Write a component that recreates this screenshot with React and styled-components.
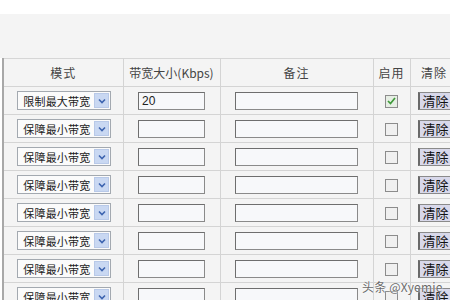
import React from 'react';
import styled, { createGlobalStyle } from 'styled-components';

const GlobalStyle = createGlobalStyle`
  html, body {
    margin: 0;
    padding: 0;
    background: #ffffff;
    font-family: "Liberation Sans", "Noto Sans CJK SC", sans-serif;
  }
`;

const Page = styled.div`
  width: 450px;
  height: 300px;
  overflow: hidden;
  position: relative;
  background: #ffffff;
`;

const TopGap = styled.div`
  height: 14px;
  background: #ffffff;
`;

const Banner = styled.div`
  height: 44px;
  background: #f4f4f4;
`;

const Table = styled.table`
  margin-left: 2px;
  border-collapse: collapse;
  table-layout: fixed;
  width: 455px;
  background: #f4f4f4;
  border-left: 2px solid #a8a8a8;
  border-top: 1px solid #d6d6d6;
`;

const Head = styled.th`
  height: 27px;
  padding: 0;
  font-weight: normal;
  font-size: 12px;
  color: #444;
  text-align: center;
  white-space: nowrap;
  border-right: 1px solid #d4d4d4;
  border-bottom: 1px solid #d4d4d4;
  font-family: "Noto Sans CJK SC", sans-serif;
  letter-spacing: ${p => (p.$wide ? '0' : '1px')};
`;

const Cell = styled.td`
  height: 27px;
  padding: 0;
  text-align: ${p => p.$align || 'center'};
  padding-left: ${p => p.$pl || 0}px;
  border-right: 1px solid #d4d4d4;
  border-bottom: 1px solid #d4d4d4;
  vertical-align: middle;
  white-space: nowrap;
  overflow: hidden;
`;

const Select = styled.div`
  display: inline-flex;
  align-items: center;
  justify-content: space-between;
  width: 94px;
  height: 19px;
  box-sizing: border-box;
  border: 1px solid #a3a9b0;
  background: #fbfbfb;
  padding-left: 5px;
  padding-right: 1px;
  font-size: 11px;
  letter-spacing: 0.2px;
  white-space: nowrap;
  color: #222;
  font-family: "Noto Sans CJK SC", sans-serif;
  vertical-align: middle;
  margin-left: 2px;
`;

const Arrow = styled.span`
  width: 15px;
  height: 15px;
  flex: none;
  background: #c9d8f2;
  border: 1px solid #b8c9e8;
  box-sizing: border-box;
  display: flex;
  align-items: center;
  justify-content: center;
`;

const TextBox = styled.div`
  display: inline-block;
  width: ${p => p.$w}px;
  height: 18px;
  box-sizing: border-box;
  border: 1px solid #6e6e6e;
  border-right-color: #8a8a8a;
  border-bottom-color: #8a8a8a;
  background: #f7f8fa;
  font-size: 12px;
  line-height: 16px;
  padding-left: 3px;
  text-align: left;
  color: #222;
  vertical-align: middle;
`;

const Check = styled.span`
  display: inline-flex;
  align-items: center;
  justify-content: center;
  width: 13px;
  height: 13px;
  box-sizing: border-box;
  border: 1px solid #8c8c8c;
  background: ${p => (p.$on ? '#e6eee4' : '#f0f0f0')};
  vertical-align: middle;
`;

const ClearBtn = styled.span`
  display: inline-block;
  height: 18px;
  width: 40px;
  box-sizing: border-box;
  border-left: 2px solid #6a6a6a;
  border-top: 1px solid #8a8a8a;
  border-bottom: 1px solid #8a8a8a;
  background: #d8d8ea;
  font-size: 13px;
  line-height: 16px;
  padding-left: 3px;
  color: #111;
  font-family: "Noto Sans CJK SC", sans-serif;
  vertical-align: middle;
`;

const Watermark = styled.div`
  position: absolute;
  left: 362px;
  top: 278px;
  font-size: 12px;
  color: #6a6a6a;
  text-shadow: 0 0 1px #fff, 0 0 2px #fff;
  font-family: "Noto Sans CJK SC", sans-serif;
  letter-spacing: 0.2px;
  white-space: nowrap;
`;

const Chevron = () => (
  <svg width="8" height="6" viewBox="0 0 8 6">
    <path d="M1 1.5 L4 4.5 L7 1.5" fill="none" stroke="#3d64b0" strokeWidth="1.6" />
  </svg>
);

const Tick = () => (
  <svg width="9" height="8" viewBox="0 0 9 8">
    <path d="M1 4 L3.5 6.5 L8 1" fill="none" stroke="#3f9a3a" strokeWidth="1.7" />
  </svg>
);

const rows = [
  { mode: '限制最大带宽', bw: '20', on: true },
  ...Array.from({ length: 7 }, () => ({ mode: '保障最小带宽', bw: '', on: false })),
];

export default function App() {
  return (
    <Page>
      <GlobalStyle />
      <TopGap />
      <Banner />
      <Table>
        <colgroup>
          <col style={{ width: 120 }} />
          <col style={{ width: 97 }} />
          <col style={{ width: 153 }} />
          <col style={{ width: 37 }} />
          <col style={{ width: 48 }} />
        </colgroup>
        <thead>
          <tr>
            <Head>模式</Head>
            <Head $wide>带宽大小(Kbps)</Head>
            <Head>备注</Head>
            <Head>启用</Head>
            <Head>清除</Head>
          </tr>
        </thead>
        <tbody>
          {rows.map((r, i) => (
            <tr key={i}>
              <Cell>
                <Select>
                  {r.mode}
                  <Arrow>
                    <Chevron />
                  </Arrow>
                </Select>
              </Cell>
              <Cell>
                <TextBox $w={67}>{r.bw}</TextBox>
              </Cell>
              <Cell>
                <TextBox $w={123} />
              </Cell>
              <Cell>
                <Check $on={r.on}>{r.on && <Tick />}</Check>
              </Cell>
              <Cell $align="left" $pl={7}>
                <ClearBtn>清除</ClearBtn>
              </Cell>
            </tr>
          ))}
        </tbody>
      </Table>
      <Watermark>头条 @Xyemie</Watermark>
    </Page>
  );
}
